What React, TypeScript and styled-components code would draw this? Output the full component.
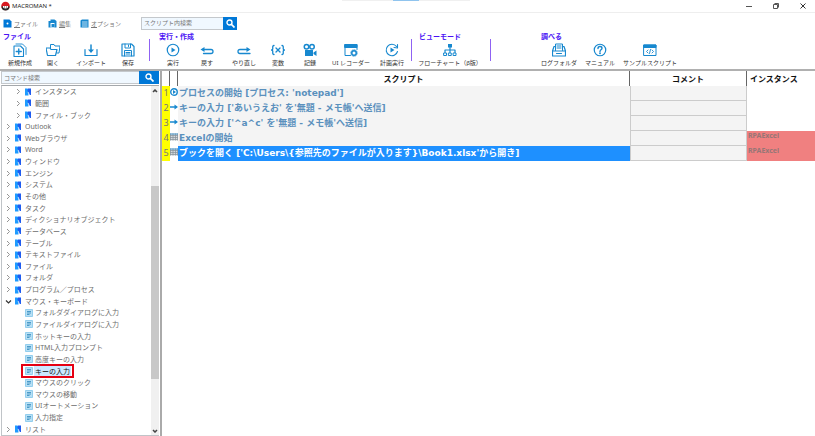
import React from "react";
import styled, { createGlobalStyle, css } from "styled-components";

const BLUE = "#1788cf";
const ACCENT = "#0078d7";

const GlobalStyle = createGlobalStyle`
  *, *::before, *::after { box-sizing: border-box; }
  html, body { margin: 0; background: #fff; }
  body {
    font-family: "Noto Sans", "Noto Sans CJK JP", sans-serif;
    font-size: 7px;
    color: #444;
    overflow: hidden;
  }
  button, input { font: inherit; color: inherit; margin: 0; padding: 0; border: 0; background: none; }
  button { cursor: pointer; white-space: nowrap; }
  ul { list-style: none; margin: 0; padding: 0; }
`;

const Window = styled.div`
  display: flex;
  flex-direction: column;
  height: 100vh;
  position: relative;
`;

const TopStrip = styled.div`
  position: absolute;
  top: 0;
  left: 42%;
  width: 128px;
  height: 1px;
  padding: 0 51px;
  background: #f0f0f0;
  &::before { content: ""; display: block; height: 1px; background: #90c4ee; }
`;

const TitleBar = styled.header`
  display: flex;
  align-items: center;
  height: 13px;
  padding-left: 1px;
  gap: 2px;
  border-bottom: 1px solid #eee;
  font-family: "Open Sans", "Noto Sans", sans-serif;
  font-size: 6px;
  color: #111;
  svg { display: block; }
`;

const Title = styled.span`
  flex: 1;
  line-height: 12px;
`;

const WindowButton = styled.button`
  width: 25px;
  height: 12px;
  display: grid;
  place-items: center;
`;

const MenuBar = styled.nav`
  display: flex;
  align-items: center;
  height: 20px;
  padding-left: 3px;
`;

const MenuButton = styled.button<{ $width: number }>`
  display: flex;
  align-items: center;
  gap: 2px;
  width: ${(p) => p.$width}px;
  font-size: 6px;
  color: #777;
  u { text-underline-offset: 1px; }
`;

const SearchForm = styled.form<{ $width?: number; $button: number; $height: number }>`
  display: flex;
  height: ${(p) => p.$height}px;
  ${(p) => p.$width && css`width: ${p.$width}px;`}
  input {
    flex: 1;
    min-width: 0;
    padding-left: 2px;
    font-size: 6px;
    background: #f0f8ff;
    border: 1px solid #c4c8cc;
    border-right: 0;
  }
  input::placeholder { color: #777; opacity: 1; }
  button {
    width: ${(p) => p.$button}px;
    display: grid;
    place-items: center;
    background: ${ACCENT};
  }
`;

const Ribbon = styled.div`
  display: flex;
  height: 38px;
  padding-left: 3px;
  border-bottom: 2px solid #b0b0b0;
`;

const Group = styled.section<{ $gap: number }>`
  flex: none;
  margin-right: ${(p) => p.$gap}px;
`;

const GroupTitle = styled.h2`
  margin: 0;
  height: 8px;
  font-size: 7px;
  line-height: 7px;
  font-weight: 700;
  color: #4a12f5;
  white-space: nowrap;
`;

const Tools = styled.div`
  display: flex;
`;

const Tool = styled.button<{ $width: number }>`
  display: flex;
  flex-direction: column;
  align-items: center;
  gap: 2px;
  width: ${(p) => p.$width}px;
  padding-top: 2px;
  font-size: 6px;
  line-height: 8px;
  color: #333;
  svg { display: block; }
`;

const Divider = styled.div<{ $gap: number }>`
  flex: none;
  width: 1px;
  height: 22px;
  margin: 6px ${(p) => p.$gap}px 0 0;
  background: #8f62f3;
`;

const Body = styled.div`
  display: flex;
  flex: 1;
  min-height: 0;
`;

const Sidebar = styled.aside`
  display: flex;
  flex-direction: column;
  flex: none;
  width: 160px;
  padding-left: 1px;
  padding-right: 1px;
`;

const TreePane = styled.div`
  display: flex;
  flex: 1;
  min-height: 0;
  margin-top: 1px;
  border: 1px solid #c0c4c8;
  border-top: 1px solid #a4a8ac;
  border-right: 0;
`;

const Tree = styled.ul`
  display: grid;
  grid-auto-rows: minmax(11px, 1fr);
  flex: 1;
  min-width: 0;
`;

const TreeItem = styled.li<{ $level: number }>`
  position: relative;
  padding-left: ${(p) => 3 + p.$level * 10}px;
`;

const TreeButton = styled.button<{ $selected?: boolean }>`
  display: grid;
  grid-template-columns: 10px 9px auto;
  align-items: center;
  height: 100%;
  line-height: 11px;
  color: ${(p) => (p.$selected ? "#111" : "#6c6c6c")};
  svg { display: block; }
  span { padding: 0 1px; ${(p) => p.$selected && css`background: #cce8ff;`} }
`;

const Marker = styled.div`
  position: absolute;
  inset: -1px auto -1px 19px;
  width: 53px;
  border: 2px solid #e60012;
  pointer-events: none;
`;

const ScrollBar = styled.div`
  display: flex;
  flex-direction: column;
  align-items: center;
  width: 8px;
  background: #f0f0f0;
`;

const ScrollArrow = styled.button`
  height: 9px;
  display: grid;
  place-items: center;
`;

const Track = styled.div`
  flex: 1;
  width: 100%;
  display: grid;
  grid-template-rows: 91fr 193fr 47fr;
  &::before { content: ""; grid-row: 2; background: #c8c8c8; }
`;

const Main = styled.main`
  flex: 1;
  min-width: 0;
  border-left: 2px solid #aaa;
`;

const Script = styled.table`
  width: 100%;
  table-layout: fixed;
  border-collapse: separate;
  border-spacing: 0;
`;

const Col = styled.col<{ $width?: number }>`
  ${(p) => p.$width && css`width: ${p.$width}px;`}
`;

const HeadCell = styled.th<{ $last?: boolean }>`
  height: 15px;
  padding: 0 0 0 ${(p) => (p.$last ? 3 : 0)}px;
  text-align: ${(p) => (p.$last ? "left" : "center")};
  font-size: 8px;
  line-height: 14px;
  color: #111;
  white-space: nowrap;
  ${(p) => !p.$last && css`border-right: 1px solid #666;`}
`;

const NumberCell = styled.th`
  height: 15px;
  padding: 0 0 1px;
  background: #ff0;
  font-size: 9px;
  line-height: 14px;
  font-weight: 400;
  color: #777;
  text-align: center;
`;

const IconCell = styled.td`
  height: 15px;
  padding: 0 0 3px;
  vertical-align: middle;
  svg { display: block; }
`;

const CommandCell = styled.td<{ $selected?: boolean }>`
  height: 15px;
  padding: 0 0 1px 1px;
  font-family: "DejaVu Sans", "Noto Sans CJK JP", sans-serif;
  font-size: 9px;
  line-height: 14px;
  font-weight: 700;
  white-space: nowrap;
  color: ${(p) => (p.$selected ? "#fff" : "#5a90bd")};
  background: ${(p) => (p.$selected ? "#1e90ff" : "#f4f4f4")};
`;

const CommentCell = styled.td`
  height: 15px;
  padding: 0;
  background: #f4f4f4;
  border: 1px solid #ccc;
  border-top: 0;
`;

const InstanceCell = styled.td<{ $filled: boolean }>`
  height: 15px;
  padding: 0 0 0 1px;
  vertical-align: top;
  font-size: 7px;
  line-height: 10px;
  font-weight: 700;
  color: #977676;
  background: ${(p) => (p.$filled ? "#f08080" : "transparent")};
`;

const Svg = ({ size = 14, children }: { size?: number; children: React.ReactNode }) => (
  <svg width={size} height={size} viewBox="0 0 28 28" fill="none" stroke={BLUE} strokeWidth="2" strokeLinejoin="round" strokeLinecap="round" aria-hidden="true">
    {children}
  </svg>
);

const icons: Record<string, React.ReactNode> = {
  new: (
    <>
      <path d="M2 6h13l6 6v15H2z" strokeWidth="2.2" />
      <path d="M6 2h13l7 7v14" strokeWidth="1.8" />
      <path d="M11.5 12v10M6.5 17h10" strokeWidth="2.8" />
    </>
  ),
  open: (
    <>
      <path d="M9 11V3h7l2 3h10l-2 14h-4" />
      <path d="M0 10h8l2 3h12l-3 12H3z" strokeWidth="2.4" />
    </>
  ),
  import: (
    <>
      <path d="M2 13v12h24V13" strokeWidth="2.4" />
      <path d="M14 4v12" strokeWidth="3" />
      <path d="m8 13 6 7 6-7z" fill={BLUE} stroke="none" />
    </>
  ),
  save: (
    <>
      <path d="M2 2h19l5 5v19H2z" strokeWidth="2.4" />
      <path d="M8 2v8h11V2M7 26V15h14v11M10 19h8M10 22h8M15 4v3" />
    </>
  ),
  run: (
    <>
      <circle cx="14" cy="14" r="11.5" strokeWidth="2.4" />
      <path d="m11 9 8 5-8 5z" fill={BLUE} stroke="none" />
    </>
  ),
  undo: (
    <>
      <path d="M6 13h16q4 0 4 4t-4 4H7" strokeWidth="2.6" />
      <path d="m1 13 8-5v10z" fill={BLUE} stroke="none" />
    </>
  ),
  redo: (
    <>
      <path d="M22 13H6q-4 0-4 4t4 4h20" strokeWidth="2.6" />
      <path d="m27 13-8-5v10z" fill={BLUE} stroke="none" />
    </>
  ),
  variable: (
    <path d="M6 5Q3 5 3.500 9.500T1 14q3 0 2.500 4.500T6 23M22 5q3 0 2.500 4.500T27 14q-3 0-2.500 4.500T22 23M10 10l8 8M18 10l-8 8" strokeWidth="2.6" />
  ),
  record: (
    <>
      <circle cx="7" cy="7.500" r="4.500" strokeWidth="3" />
      <circle cx="18" cy="7.500" r="4.500" strokeWidth="3" />
      <path d="M4 14h16v12H4zM21 19l6-4v11l-6-4z" fill={BLUE} stroke="none" />
    </>
  ),
  recorder: (
    <>
      <path d="M13 25H2V3h24v10" />
      <path d="M2 3h24v6H2z" fill={BLUE} />
      <circle cx="20" cy="20" r="4.500" strokeWidth="3" />
      <circle cx="20" cy="20" r="6.500" strokeWidth="1.500" strokeDasharray="2.500 2.500" />
    </>
  ),
  schedule: (
    <>
      <path d="M23 7A11.500 11.500 0 1 0 25 17" strokeWidth="2.200" />
      <path d="m25 3 0 7-7-1" strokeWidth="2.200" />
      <path d="m11 9 8 5-8 5z" fill={BLUE} stroke="none" />
    </>
  ),
  flow: (
    <>
      <path d="M10 2h8v7h-8z" fill={BLUE} stroke="none" />
      <path d="M14 8v11M4 19v-5h20v5" strokeWidth="2.400" />
      <path d="M2 20h5v5H2zM11.500 20h5v5h-5zM21 20h5v5h-5z" />
    </>
  ),
  log: (
    <>
      <path d="M7 15V2h14v13M10 6h8M10 10h8" />
      <path d="M7 7H4L1 16v10h26V16l-3-9h-3M1 16h26M9 21h10" strokeWidth="2.400" />
    </>
  ),
  manual: (
    <>
      <circle cx="14" cy="14" r="11.500" strokeWidth="2.400" />
      <path d="M10 11q0-4 4-4t4 3.500q0 2-2.500 3.500-1.500 1-1.500 3" strokeWidth="2.800" />
      <circle cx="14" cy="20.500" r="1.800" fill={BLUE} stroke="none" />
    </>
  ),
  sample: (
    <>
      <path d="M2 4h24v21H2z" />
      <path d="M2 4h24v5H2z" fill={BLUE} />
      <path d="m10 14-3 3 3 3M18 14l3 3-3 3M15 13l-2 8" strokeWidth="1.800" />
    </>
  ),
};

const Chevron = ({ open }: { open?: boolean }) => (
  <svg width="7" height="7" viewBox="0 0 14 14" fill="none" stroke={open ? "#333" : "#888"} strokeWidth={open ? 2.4 : 1.8} aria-hidden="true">
    <path d={open ? "M2 5l5 5 5-5" : "M4 2l5 5-5 5"} />
  </svg>
);

const ModuleIcon = () => (
  <svg width="6" height="8" viewBox="0 0 12 16" aria-hidden="true">
    <path d="M0 1h5l2 3v11H0z" fill="#1e9bff" />
    <path d="M6 1h6v13H9L5 5z" fill="#1f5cf0" />
    <path d="m6 8 3 6" stroke="#d8ecff" strokeWidth="1.500" />
  </svg>
);

const CommandIcon = () => (
  <svg width="8" height="8" viewBox="0 0 16 16" aria-hidden="true">
    <path d="M1 1h14v14H1z" fill="#b8e0f5" stroke="#7cc3e8" strokeWidth="1.500" />
    <path d="M4 5h8M4 8h8M4 11h5" stroke="#2683b8" strokeWidth="1.500" />
  </svg>
);

const SearchIcon = () => (
  <svg width="9" height="9" viewBox="0 0 18 18" fill="none" stroke="#fff" aria-hidden="true">
    <circle cx="7" cy="7" r="5" strokeWidth="2.800" />
    <path d="m11 11 6 6" strokeWidth="3.500" />
  </svg>
);

const RowIcon = ({ kind }: { kind: string }) => (
  <svg width="8" height="8" viewBox="0 0 16 16" fill="none" aria-hidden="true">
    {kind === "run" && (
      <>
        <circle cx="8" cy="8" r="6.500" fill="#fff" stroke={BLUE} strokeWidth="2.800" />
        <path d="m6 4 6 4-6 4z" fill={BLUE} />
      </>
    )}
    {kind === "key" && (
      <>
        <path d="M0 8h12" stroke={BLUE} strokeWidth="3" />
        <path d="m9 3 7 5-7 5z" fill={BLUE} />
      </>
    )}
    {kind === "grid" && (
      <>
        <path d="M0 1h16v14H0z" fill="#d5dade" />
        <path d="M0 5h16M0 9h16M0 13h16M1 1v14M6 1v14M11 1v14M15 1v14" stroke="#8a949b" strokeWidth="1.500" />
        <path d="M0 1h16v2H0z" fill="#4a9ad0" />
      </>
    )}
  </svg>
);

const menus = [
  { key: "ファイル", width: 45, icon: <><path d="M1 1h12l4 4v12H1z" fill={ACCENT} /><circle cx="9" cy="9" r="2" fill="#fff" /></> },
  { key: "編集", width: 32, icon: <><path d="M1 4h4V1h8l4 3v13H1z" fill={BLUE} /><path d="M5 8h8v9H5z" fill="#fff" /><path d="M7 10h6v6H7z" fill={BLUE} /></> },
  { key: "オプション", width: 61, icon: <><path d="M1 3l3-2h13v16H1z" fill={BLUE} /><path d="M4 6h11M4 10h11M4 14h11" stroke="#fff" strokeWidth="1.500" /></> },
];

type ToolData = [icon: string, label: string, width: number];
const groups: { title: string; gap: number; after?: number; tools: ToolData[] }[] = [
  { title: "ファイル", gap: 6, after: 9, tools: [["new", "新規作成", 34], ["open", "開く", 32], ["import", "インポート", 44], ["save", "保存", 30]] },
  {
    title: "実行・作成", gap: 4, after: 7,
    tools: [["run", "実行", 28], ["undo", "戻す", 40], ["redo", "やり直し", 34], ["variable", "変数", 34], ["record", "記録", 30], ["recorder", "UI レコーダー", 52], ["schedule", "計画実行", 30]],
  },
  { title: "ビューモード", gap: 9, after: 50, tools: [["flow", "フローチャート（β版）", 62]] },
  { title: "調べる", gap: 0, tools: [["log", "ログフォルダ", 36], ["manual", "マニュアル", 46], ["sample", "サンプルスクリプト", 54]] },
];

type Node = { label: string; level: number; kind: "module" | "command"; open?: boolean; selected?: boolean };
const modules = (level: number, labels: string[]): Node[] => labels.map((label) => ({ label, level, kind: "module" }));
const tree: Node[] = [
  ...modules(1, ["インスタンス", "範囲", "ファイル・ブック"]),
  ...modules(0, [
    "Outlook", "Webブラウザ", "Word", "ウィンドウ", "エンジン", "システム", "その他", "タスク",
    "ディクショナリオブジェクト", "データベース", "テーブル", "テキストファイル", "ファイル", "フォルダ", "プログラム／プロセス",
  ]),
  { label: "マウス・キーボード", level: 0, kind: "module", open: true },
  ...[
    "フォルダダイアログに入力", "ファイルダイアログに入力", "ホットキーの入力", "HTML入力プロンプト", "高度キーの入力",
    "キーの入力", "マウスのクリック", "マウスの移動", "UIオートメーション", "入力指定",
  ].map((label): Node => ({ label, level: 1, kind: "command", selected: label === "キーの入力" })),
  ...modules(0, ["リスト"]),
];

const steps = [
  { icon: "run", text: "プロセスの開始 [プロセス: 'notepad']", instance: "" },
  { icon: "key", text: "キーの入力 ['あいうえお' を'無題 - メモ帳'へ送信]", instance: "" },
  { icon: "key", text: "キーの入力 ['^a^c' を'無題 - メモ帳'へ送信]", instance: "" },
  { icon: "grid", text: "Excelの開始", instance: "RPAExcel" },
  { icon: "grid", text: "ブックを開く ['C:\\Users\\{参照先のファイルが入ります}\\Book1.xlsx'から開き]", instance: "RPAExcel", selected: true },
];

const Search = ({ label, width, button, height }: { label: string; width?: number; button: number; height: number }) => (
  <SearchForm $width={width} $button={button} $height={height} onSubmit={(e) => e.preventDefault()}>
    <input type="text" placeholder={label} aria-label={label} />
    <button type="submit" aria-label="検索"><SearchIcon /></button>
  </SearchForm>
);

export default function App() {
  return (
    <Window lang="ja">
      <GlobalStyle />
      <TitleBar>
        <svg width="9" height="10" viewBox="0 0 18 20" aria-hidden="true">
          <circle cx="9" cy="10" r="8.500" fill="#d71920" />
          <path d="M1 11h16a8 8 0 0 1-16 0z" fill="#2b2b2b" />
          <path d="M4 10h10v3q-5 4-10 0z" fill="#fff" />
          <path d="M6 12h2M10 12h2" stroke="#222" strokeWidth="1.500" />
        </svg>
        <Title>MACROMAN *</Title>
        <WindowButton aria-label="最小化"><svg width="6" height="6" stroke="#555" fill="none"><path d="M0 3.500h6" /></svg></WindowButton>
        <WindowButton aria-label="元に戻す"><svg width="6" height="6" stroke="#555" fill="none"><path d="M.5 1.500h4v4h-4zM1.500.5h4v4" /></svg></WindowButton>
        <WindowButton aria-label="閉じる"><svg width="6" height="6" stroke="#333" fill="none"><path d="M.5.5l5 5M5.500.5l-5 5" /></svg></WindowButton>
      </TitleBar>
      <TopStrip />
      <MenuBar>
        {menus.map((m) => (
          <MenuButton key={m.key} $width={m.width}>
            <svg width="9" height="9" viewBox="0 0 18 18" aria-hidden="true">{m.icon}</svg>
            <span><u>{m.key[0]}</u>{m.key.slice(1)}</span>
          </MenuButton>
        ))}
        <Search label="スクリプト内検索" width={96} button={14} height={13} />
      </MenuBar>
      <Ribbon>
        {groups.map((g) => (
          <React.Fragment key={g.title}>
            <Group $gap={g.gap}>
              <GroupTitle>{g.title}</GroupTitle>
              <Tools>
                {g.tools.map(([icon, label, width]) => (
                  <Tool key={icon} $width={width}>
                    <Svg>{icons[icon]}</Svg>
                    {label}
                  </Tool>
                ))}
              </Tools>
            </Group>
            {g.after !== undefined && <Divider $gap={g.after} />}
          </React.Fragment>
        ))}
      </Ribbon>
      <Body>
        <Sidebar>
          <Search label="コマンド検索" button={20} height={13} />
          <TreePane>
            <Tree>
              {tree.map((n) => (
                <TreeItem key={n.level + n.label} $level={n.level}>
                  <TreeButton $selected={n.selected}>
                    {n.kind === "module" ? <Chevron open={n.open} /> : <i />}
                    {n.kind === "module" ? <ModuleIcon /> : <CommandIcon />}
                    <span>{n.label}</span>
                  </TreeButton>
                  {n.selected && <Marker />}
                </TreeItem>
              ))}
            </Tree>
            <ScrollBar>
              <ScrollArrow aria-label="上へ"><svg width="6" height="4" fill="none" stroke="#444" strokeWidth="1.500"><path d="M1 3l2-2 2 2" /></svg></ScrollArrow>
              <Track />
              <ScrollArrow aria-label="下へ"><svg width="6" height="4" fill="none" stroke="#444" strokeWidth="1.500"><path d="M1 1l2 2 2-2" /></svg></ScrollArrow>
            </ScrollBar>
          </TreePane>
        </Sidebar>
        <Main>
          <Script>
            <colgroup>
              <Col $width={8} />
              <Col $width={8} />
              <Col />
              <Col $width={117} />
              <Col $width={68} />
            </colgroup>
            <thead>
              <tr>
                <HeadCell aria-label="番号" />
                <HeadCell aria-label="種類" />
                <HeadCell>スクリプト</HeadCell>
                <HeadCell>コメント</HeadCell>
                <HeadCell $last>インスタンス</HeadCell>
              </tr>
            </thead>
            <tbody>
              {steps.map((s, i) => (
                <tr key={i}>
                  <NumberCell scope="row">{i + 1}</NumberCell>
                  <IconCell><RowIcon kind={s.icon} /></IconCell>
                  <CommandCell $selected={s.selected}>{s.text}</CommandCell>
                  <CommentCell />
                  <InstanceCell $filled={s.instance !== ""}>{s.instance}</InstanceCell>
                </tr>
              ))}
            </tbody>
          </Script>
        </Main>
      </Body>
    </Window>
  );
}
